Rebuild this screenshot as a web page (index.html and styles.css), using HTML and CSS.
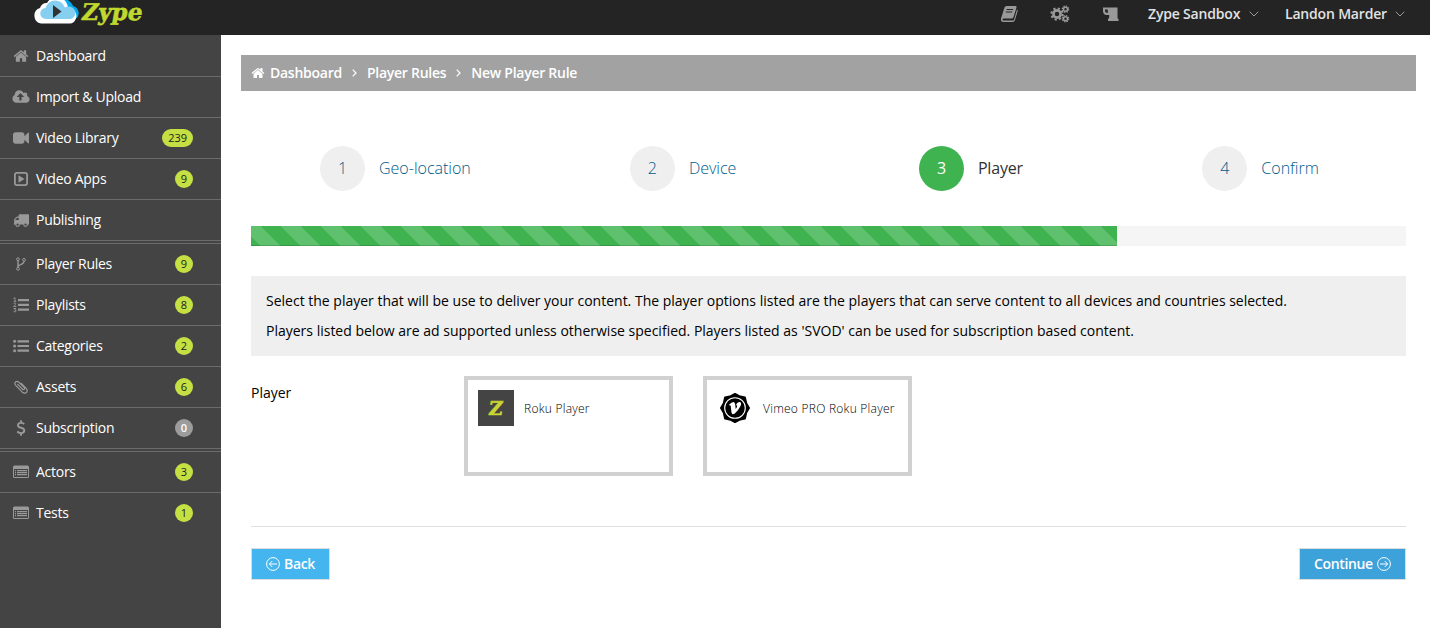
FILE: index.html
```html
<!DOCTYPE html>
<html lang="en">
<head>
<meta charset="utf-8">
<title>Zype</title>
<link rel="stylesheet" href="styles.css">
</head>
<body>
<svg width="0" height="0" class="defs">
  <symbol id="home" viewBox="0 0 1792 1792"><path d="M1472 992v480q0 26-19 45t-45 19h-384v-384h-256v384h-384q-26 0-45-19t-19-45v-480q0-1 .5-3t.5-3l575-474 575 474q1 2 1 6zm223-69l-62 74q-8 9-21 11h-3q-13 0-21-7l-692-577-692 577q-12 8-24 7-13-2-21-11l-62-74q-8-10-7-23.5t11-21.5l719-599q32-26 76-26t76 26l244 204v-195q0-14 9-23t23-9h192q14 0 23 9t9 23v408l219 182q10 8 11 21.5t-7 23.5z"/></symbol>
  <symbol id="table" viewBox="0 0 16 14"><path fill-rule="evenodd" d="M1.500 .5h13a1.500 1.500 0 0 1 1.500 1.500v9.500a1.500 1.500 0 0 1-1.500 1.500h-13a1.500 1.500 0 0 1-1.500-1.500v-9.500a1.500 1.500 0 0 1 1.500-1.500zM1 4v7.500q0 .5.5.5h13q.5 0 .5-.5V4z"/><path d="M2 5h1v1.300H2zM4 5h10v1.300H4zM2 7h1v1.300H2zM4 7h10v1.300H4zM2 9h1v1.300H2zM4 9h10v1.300H4z"/></symbol>
</svg>
<header class="topbar">
  <a class="brand">
    <svg class="cloud" width="46" height="26" viewBox="0 0 46 26">
      <path fill="#00a9ef" d="M18 8a12 12 0 0 1 21-2 7 7 0 0 1 1 2 7.500 7.500 0 0 1 4 12H20z"/>
      <path fill="#fff" d="M8 25.500a8 8 0 0 1-1-15.500A6.500 6.500 0 0 1 14 5a11 11 0 0 1 19-1 12 12 0 0 1 2 6 8 8 0 0 1 8 10.500q-2 5-6 5z"/>
      <path fill="#86cff1" d="M13 21a5.500 5.500 0 0 1-.5-11A10 10 0 0 1 22 2.500q7 0 10 7a7 7 0 0 1 10 3 6.500 6.500 0 0 1-4 8.500z"/>
      <path fill="#333" d="M20 7 28.500 13.500 20 20z"/>
    </svg>
    <span class="wordmark">Zype</span>
  </a>
  <nav class="tools">
    <svg class="i-book" width="18" height="18" viewBox="0 0 18 18"><path fill-rule="evenodd" d="M6.500 1h9q1.500 0 1 1.500L13.500 12q-.5 1.500-2 1.500H4q-1.500 0-1.500 1t1 1H13q.8 0 1-.8L17 4.500q1 .5.6 1.700L15 15q-.6 2-2.500 2h-9Q.5 17 1 13.500L4.500 2.500Q5 1 6.500 1zM6.800 4l-.4 1h6.500l.4-1zM6 6.500l-.4 1H12l.4-1z"/></svg>
    <svg class="i-cogs" width="20" height="18" viewBox="0 0 20 18"><g fill="none" stroke="currentColor"><circle cx="7" cy="9" r="3.600" stroke-width="2.700"/><circle cx="7" cy="9" r="5.700" stroke-width="1.900" stroke-dasharray="2.240 2.240"/><circle cx="15.500" cy="4.200" r="2" stroke-width="1.500"/><circle cx="15.500" cy="4.200" r="3.200" stroke-width="1.200" stroke-dasharray="1.430 1.080"/><circle cx="15.500" cy="13.700" r="2" stroke-width="1.500"/><circle cx="15.500" cy="13.700" r="3.200" stroke-width="1.200" stroke-dasharray="1.430 1.080"/></g></svg>
    <svg class="i-cup" width="17" height="16" viewBox="0 0 17 16"><path fill-rule="evenodd" d="M1 1.500h14.500v10q0 1 1 1.500v2H6v-2q1.200-.6 1.200-2V9H4Q1 8 1 5zM3 3.500V5q0 1.800 2.800 2V3.500z"/></svg>
    <span class="menu"><span class="w92">Zype Sandbox</span><svg width="10" height="6" viewBox="0 0 10 6"><path d="M.7.7 5 5 9.300.7"/></svg></span>
    <span class="menu"><span class="w101">Landon Marder</span><svg width="10" height="6" viewBox="0 0 10 6"><path d="M.7.7 5 5 9.300.7"/></svg></span>
  </nav>
</header>
<div class="shell">
  <aside class="sidebar">
    <ul>
      <li><i><svg width="16" height="16"><use href="#home"/></svg></i><span>Dashboard</span></li>
      <li><i><svg width="18" height="16" viewBox="-64 0 1920 1792"><path d="M1216 864q0-14-9-23l-352-352q-9-9-23-9t-23 9l-351 351q-10 12-10 24 0 14 9 23t23 9h224v352q0 13 9.500 22.500t22.500 9.500h192q13 0 22.500-9.500t9.500-22.500v-352h224q13 0 22.500-9.500t9.500-22.500zm640 288q0 159-112.500 271.500t-271.500 112.500h-1088q-185 0-316.500-131.500t-131.500-316.500q0-130 70-240t188-165q-2-30-2-43 0-212 150-362t362-150q156 0 285.500 87t188.500 231q71-62 166-62 106 0 181 75t75 181q0 76-41 138 130 31 213.500 135.500t83.500 238.500z"/></svg></i><span>Import &amp; Upload</span></li>
      <li><i><svg width="16" height="16" viewBox="0 0 1792 1792"><path d="M1792 352v1088q0 42-39 59-13 5-25 5-27 0-45-19l-403-403v166q0 119-84.500 203.500t-203.500 84.500h-704q-119 0-203.500-84.500t-84.500-203.500v-704q0-119 84.500-203.500t203.500-84.500h704q119 0 203.500 84.500t84.500 203.500v165l403-402q18-19 45-19 12 0 25 5 39 17 39 59z"/></svg></i><span>Video Library</span><b>239</b></li>
      <li><i><svg width="14" height="14" viewBox="0 0 14 14"><rect x=".9" y=".9" width="12.200" height="12.200" rx="2" fill="none" stroke="currentColor" stroke-width="1.800"/><path d="M4.500 3.300 10.500 7l-6 3.700z"/></svg></i><span>Video Apps</span><b>9</b></li>
      <li><i><svg width="16" height="16" viewBox="0 0 1792 1792"><path d="M640 1408q0-52-38-90t-90-38-90 38-38 90 38 90 90 38 90-38 38-90zm-384-512h384v-256h-158q-13 0-22 9l-195 195q-9 9-9 22v30zm1280 512q0-52-38-90t-90-38-90 38-38 90 38 90 90 38 90-38 38-90zm256-1088v1024q0 15-4 26.500t-13.500 18.500-16.500 11.500-23.500 6-22.500 2-25.500 0-22.500-.5q0 106-75 181t-181 75-181-75-75-181h-384q0 106-75 181t-181 75-181-75-75-181h-64q-3 0-22.500.5t-25.500 0-22.500-2-23.500-6-16.500-11.500-13.500-18.500-4-26.500q0-26 19-45t45-19v-320q0-8-.5-35t0-38 2.500-34.500 6.500-37 14-30.500 22.500-30l198-198q19-19 50.500-32t58.500-13h160v-192q0-26 19-45t45-19h1024q26 0 45 19t19 45z"/></svg></i><span>Publishing</span></li>
    </ul>
    <ul>
      <li><i><svg width="10" height="14" viewBox="0 0 10 14"><g fill="none" stroke="currentColor" stroke-width="1"><circle cx="2" cy="2.200" r="1.400"/><circle cx="2" cy="11.800" r="1.400"/><circle cx="8" cy="2.800" r="1.400"/><path stroke-width="1.400" d="M2 3.600v6.800M8 4.200c0 4-6 2.800-6 5.800"/></g></svg></i><span>Player Rules</span><b>9</b></li>
      <li><i><svg width="16" height="16" viewBox="0 0 16 16"><path d="M5 2h11v2.200H5zM5 6.800h11V9H5zM5 11.500h11v2.200H5z"/><path fill="none" stroke="currentColor" stroke-width=".9" d="M.5 1.500 2 .7v3.500M.7 4.400h2.600M.5 6.600q1-1.100 2.200-.3.700 1-2.200 3.200h2.800M.5 11.500h2.500l-1.500 1.400q1.700 0 1.700 1.100-.5 1.500-2.700.7"/></svg></i><span>Playlists</span><b>8</b></li>
      <li><i><svg width="16" height="14" viewBox="0 0 16 14"><path d="M4.500 1.200H16v2.200H4.500zM4.500 5.900H16v2.200H4.500zM4.500 10.600H16v2.200H4.500z"/><circle cx="1.600" cy="2.300" r="1.500"/><circle cx="1.600" cy="7" r="1.500"/><circle cx="1.600" cy="11.700" r="1.500"/></svg></i><span>Categories</span><b>2</b></li>
      <li><i><svg width="14" height="14" viewBox="0 0 14 14"><path fill="none" stroke="currentColor" stroke-width="1.200" stroke-linecap="round" d="M3.700 4.300 8.600 9.200q1.100.8 1.700 0t0-1.500L4.900 2.300Q3 .5 1.500 2t.2 3.300l6.100 6.400q2.600 2.500 4.500.8t-.3-4.400L7.300 3.400"/></svg></i><span>Assets</span><b>6</b></li>
      <li><i><svg width="10" height="16" viewBox="0 0 10 16"><path fill="none" stroke="currentColor" stroke-width="1.900" d="M8.300 4Q6.500 2.700 4.500 2.900 2 3.200 2 5.200 2 7 5 7.700q3.300.7 3.300 2.900 0 2.300-3 2.500Q3 13.200 1.300 11.500M5 .3V3M5 13v2.700"/></svg></i><span>Subscription</span><b class="none">0</b></li>
    </ul>
    <ul>
      <li><i><svg width="16" height="14"><use href="#table"/></svg></i><span>Actors</span><b>3</b></li>
      <li class="last"><i><svg width="16" height="14"><use href="#table"/></svg></i><span>Tests</span><b>1</b></li>
    </ul>
  </aside>
  <main>
    <nav class="crumbs">
      <svg width="14" height="14"><use href="#home"/></svg>
      <span class="c1">Dashboard</span>
      <svg class="sep" width="5" height="8" viewBox="0 0 5 8"><path d="M.7.7 4 4 .7 7.300"/></svg>
      <span>Player Rules</span>
      <svg class="sep" width="5" height="8" viewBox="0 0 5 8"><path d="M.7.7 4 4 .7 7.300"/></svg>
      <span>New Player Rule</span>
    </nav>
    <div class="content">
      <ol class="steps">
        <li><b>1</b><span>Geo-location</span></li>
        <li><b>2</b><span>Device</span></li>
        <li class="active"><b>3</b><span>Player</span></li>
        <li><b>4</b><span>Confirm</span></li>
      </ol>
      <div class="progress"><div class="bar" style="width:75%"></div></div>
      <div class="note">
        <p>Select the player that will be use to deliver your content. The player options listed are the players that can serve content to all devices and countries selected.</p>
        <p>Players listed below are ad supported unless otherwise specified. Players listed as 'SVOD' can be used for subscription based content.</p>
      </div>
      <div class="field">
        <label>Player</label>
        <div class="card"><span class="zlogo"><span>Z</span></span><span>Roku Player</span></div>
        <div class="card">
          <svg width="36" height="36" viewBox="-18 -18 36 36"><path stroke="#000" stroke-width="2" stroke-linejoin="round" d="M0-14 4.200-11.800 9.900-10.500 11.200-4.700 14 0 11.200 4.700 9.900 10.500 4.200 11.800 0 14-4.200 11.800-9.900 10.500-11.200 4.700-14 0-11.200-4.700-9.900-10.500-4.200-11.800z"/><circle r="10.300" fill="none" stroke="#fff" stroke-width="1.100"/><path fill="#fff" d="M-6-3.200Q-3.500-6-1.500-6 0-6 .2-3.500L.7 1Q2.500-1.300 2.200-2.300 1.800-3 .9-2.500 2-6.200 4.800-6 7-5.500 5.500-2 3.700 2-.2 5.400-2.900 7.400-3.500 4.500L-4.300-2Q-4.600-3.200-5.400-2.500z"/></svg>
          <span>Vimeo PRO Roku Player</span></div>
      </div>
      <div class="actions">
        <button class="back"><svg width="14" height="14" viewBox="0 0 14 14"><circle cx="7" cy="7" r="6.400"/><path d="M11 7H3.300M6.300 4l-3 3 3 3"/></svg><span>Back</span></button>
        <button class="next"><span>Continue</span><svg width="14" height="14" viewBox="0 0 14 14"><circle cx="7" cy="7" r="6.400"/><path d="M3 7h7.700M7.700 4l3 3-3 3"/></svg></button>
      </div>
    </div>
  </main>
</div>
</body>
</html>
```

FILE: styles.css
```css
* { box-sizing: border-box; }
body { margin: 0; height: 628px; overflow: hidden; background: #fff; color: #000; font: 14px/20px "Open Sans", sans-serif; display: flex; flex-direction: column; white-space: nowrap; }
svg { fill: currentColor; flex: none; display: block; }
.defs { display: none; }
ul, ol { margin: 0; padding: 0; list-style: none; }
p { margin: 0; }
.topbar { height: 35px; flex: none; background: #242424; display: flex; justify-content: space-between; padding: 0 25px 0 33px; }
.brand { display: flex; gap: 3px; }
.cloud { margin-top: -2px; }
.wordmark { font: bold 23px/24px "DejaVu Serif", serif; color: #c1d82f; letter-spacing: 0; height: 24px; -webkit-text-stroke: .6px #c1d82f; transform: skewX(-10deg); }
.tools { display: flex; align-items: center; height: 28px; color: #999; }
.i-cogs { margin-left: 32px; }
.i-cup { margin: 0 29px 0 32px; }
.menu { display: flex; align-items: center; color: #e2e2e2; font-weight: 600; letter-spacing: -.18px; gap: 9px; }
.menu + .menu { margin-left: 26px; }
.menu svg { fill: none; stroke: #999; stroke-width: 1; }
.w92 { width: 92px; }
.w101 { width: 101px; }
.shell { flex: 1; display: flex; }
.sidebar { width: 221px; flex: none; background: #444; padding-top: 1px; color: #fff; }
.sidebar ul + ul { border-top: 1px solid #6b6b6b; margin-top: 2px; }
.sidebar li { height: 41px; border-bottom: 1px solid #6b6b6b; display: flex; align-items: center; padding: 0 28px 0 12px; letter-spacing: -.27px; }
.sidebar li.last { border-bottom-color: transparent; }
.sidebar i { width: 18px; margin-right: 6px; display: flex; justify-content: center; color: #999; }
.sidebar b { margin-left: auto; min-width: 18px; height: 18px; border-radius: 9px; background: #c5e043; color: #222; font-size: 11px; line-height: 18px; font-weight: 400; text-align: center; padding: 0 6px; letter-spacing: 0; }
.sidebar b.none { background: #9c9c9c; color: #fff; font-weight: 600; }
main { flex: 1; padding: 20px 14px 0 20px; }
.crumbs { height: 36px; background: #a2a2a2; color: #fff; display: flex; align-items: center; padding-left: 10px; font-weight: 600; letter-spacing: -.26px; }
.crumbs .c1 { margin-left: 5px; }
.sep { fill: none; stroke: #fff; stroke-width: 1.2; margin: 0 10px; }
.content { padding: 0 10px; }
.steps { display: grid; grid-template-columns: repeat(4, 1fr); margin: 55px 1px 0 -1px; font-size: 16px; font-weight: 300; color: #005b8c; }
.steps li { display: flex; justify-content: center; align-items: center; gap: 14px; }
.steps li:first-child { padding-left: 2px; }
.steps b { width: 45px; height: 45px; border-radius: 50%; background: #efefef; text-align: center; line-height: 45px; font-weight: 300; }
.steps span { padding-bottom: 2px; }
.steps .active { color: #333; font-weight: 400; letter-spacing: -.2px; padding-right: 2px; }
.steps .active b { background: #3eb350; color: #fff; font-weight: 400; }
.progress { height: 20px; margin-top: 35px; background: #f5f5f5; }
.bar { height: 20px; background: #3eb350 linear-gradient(45deg, rgba(255,255,255,.17) 25%, transparent 25%, transparent 50%, rgba(255,255,255,.17) 50%, rgba(255,255,255,.17) 75%, transparent 75%) -10px 0 / 40px 40px; box-shadow: inset 0 -1px 0 rgba(0,0,0,.15); }
.note { height: 80px; margin-top: 30px; padding: 10px 15px; background: #efefef; line-height: 30px; }
.field { display: flex; margin-top: 20px; }
.field label { width: 213px; line-height: 34px; }
.card { width: 209px; height: 100px; border: 4px solid #d1d1d1; margin-right: 30px; padding: 10px; display: flex; gap: 10px; font-size: 12px; font-weight: 300; line-height: 37px; letter-spacing: .25px; }
.zlogo { width: 36px; height: 36px; background: #444; color: #c9d532; text-align: center; font: bold 19px/36px "DejaVu Serif", serif; -webkit-text-stroke: .7px #c9d532; }
.zlogo span { display: inline-block; transform: skewX(-8deg); }
.actions { border-top: 1px solid #e0e0e0; margin-top: 50px; padding-top: 21px; display: flex; justify-content: space-between; }
button { height: 32px; border: 1px solid #ddd; color: #fff; font: 600 14px/20px "Open Sans", sans-serif; letter-spacing: -.35px; padding: 0 14px; display: flex; align-items: center; gap: 4px; }
button svg { fill: none; stroke: currentColor; }
.back { background: #44b5ee; width: 79px; }
.next { background: #3ca2d9; width: 107px; }
```
